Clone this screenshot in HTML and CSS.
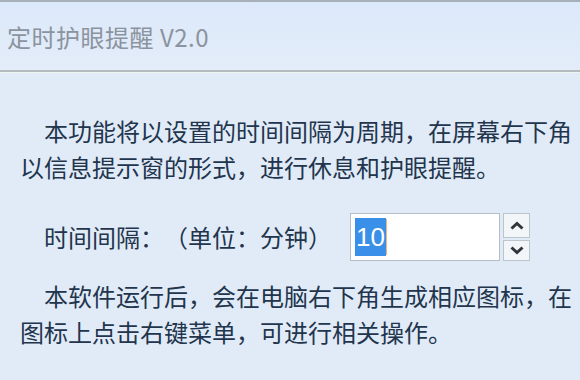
FILE: index.html
```html
<!DOCTYPE html>
<html lang="zh-CN">
<head>
<meta charset="utf-8">
<title>定时护眼提醒 V2.0</title>
<link rel="stylesheet" href="styles.css">
</head>
<body>
<div class="window">
  <header class="titlebar">定时护眼提醒 V2.0</header>
  <main class="content">
    <p class="para first">本功能将以设置的时间间隔为周期，在屏幕右下角以信息提示窗的形式，进行休息和护眼提醒。</p>
    <div class="row">
      <span class="label">时间间隔：（单位：分钟）</span>
      <div class="spinner">
        <div class="input"><span class="sel">10</span><span class="caret"></span></div>
        <div class="spin">
          <div class="btn up"><svg width="14" height="9" viewBox="0 0 14 9"><path d="M1.5 7.5 L7 2.5 L12.5 7.5" fill="none" stroke="#30353c" stroke-width="3"/></svg></div>
          <div class="btn down"><svg width="14" height="9" viewBox="0 0 14 9"><path d="M1.5 1.5 L7 6.5 L12.5 1.5" fill="none" stroke="#30353c" stroke-width="3"/></svg></div>
        </div>
      </div>
    </div>
    <p class="para last">本软件运行后，会在电脑右下角生成相应图标，在图标上点击右键菜单，可进行相关操作。</p>
  </main>
</div>
</body>
</html>
```

FILE: styles.css
```css
html, body {
  margin: 0;
  padding: 0;
}
body {
  width: 580px;
  height: 380px;
  overflow: hidden;
  background: #e1ebf8;
  font-family: "Noto Sans CJK SC", "Noto Sans", sans-serif;
  font-size: 24px;
  color: #22354d;
  text-spacing-trim: space-all;
}
.window {
  display: flex;
  flex-direction: column;
}
.titlebar {
  height: 68px;
  border-top: 2px solid #a7b0b9;
  border-bottom: 2px solid #b3bbbf;
  background: linear-gradient(#dce9fa, #e3ecf9);
  box-shadow: 0 1px 0 #eef4f2;
  display: flex;
  align-items: center;
  padding-left: 7px;
  color: #8b939e;
  letter-spacing: 0.5px;
}
.content {
  padding: 0 4px 0 20px;
}
.para {
  margin: 0;
  line-height: 36px;
  text-indent: 24px;
}
.para.first {
  margin-top: 41px;
}
.row {
  margin-top: 28px;
  display: flex;
  align-items: center;
  padding-left: 24px;
  height: 48px;
}
.label {
  width: 306px;
  line-height: 48px;
  white-space: nowrap;
}
.spinner {
  display: flex;
  gap: 3px;
  height: 48px;
}
.input {
  width: 144px;
  height: 46px;
  border: 1px solid #b6bec6;
  background: #ffffff;
  display: flex;
  align-items: center;
  padding-left: 4px;
  box-sizing: content-box;
}
.sel {
  background: #3a8fe8;
  color: #ffffff;
  line-height: 38px;
  padding: 0 1px;
  font-family: "Liberation Sans", sans-serif;
  font-size: 26px;
}
.caret {
  width: 1px;
  height: 36px;
  background: #e9b77a;
}
.spin {
  display: flex;
  flex-direction: column;
  gap: 2px;
}
.btn {
  width: 25px;
  border: 1px solid #bcc4cc;
  background: #f3f6f9;
  display: flex;
  align-items: center;
  justify-content: center;
}
.btn.up {
  height: 23px;
}
.btn.down {
  height: 19px;
}
.para.last {
  margin-top: 17px;
}
```
